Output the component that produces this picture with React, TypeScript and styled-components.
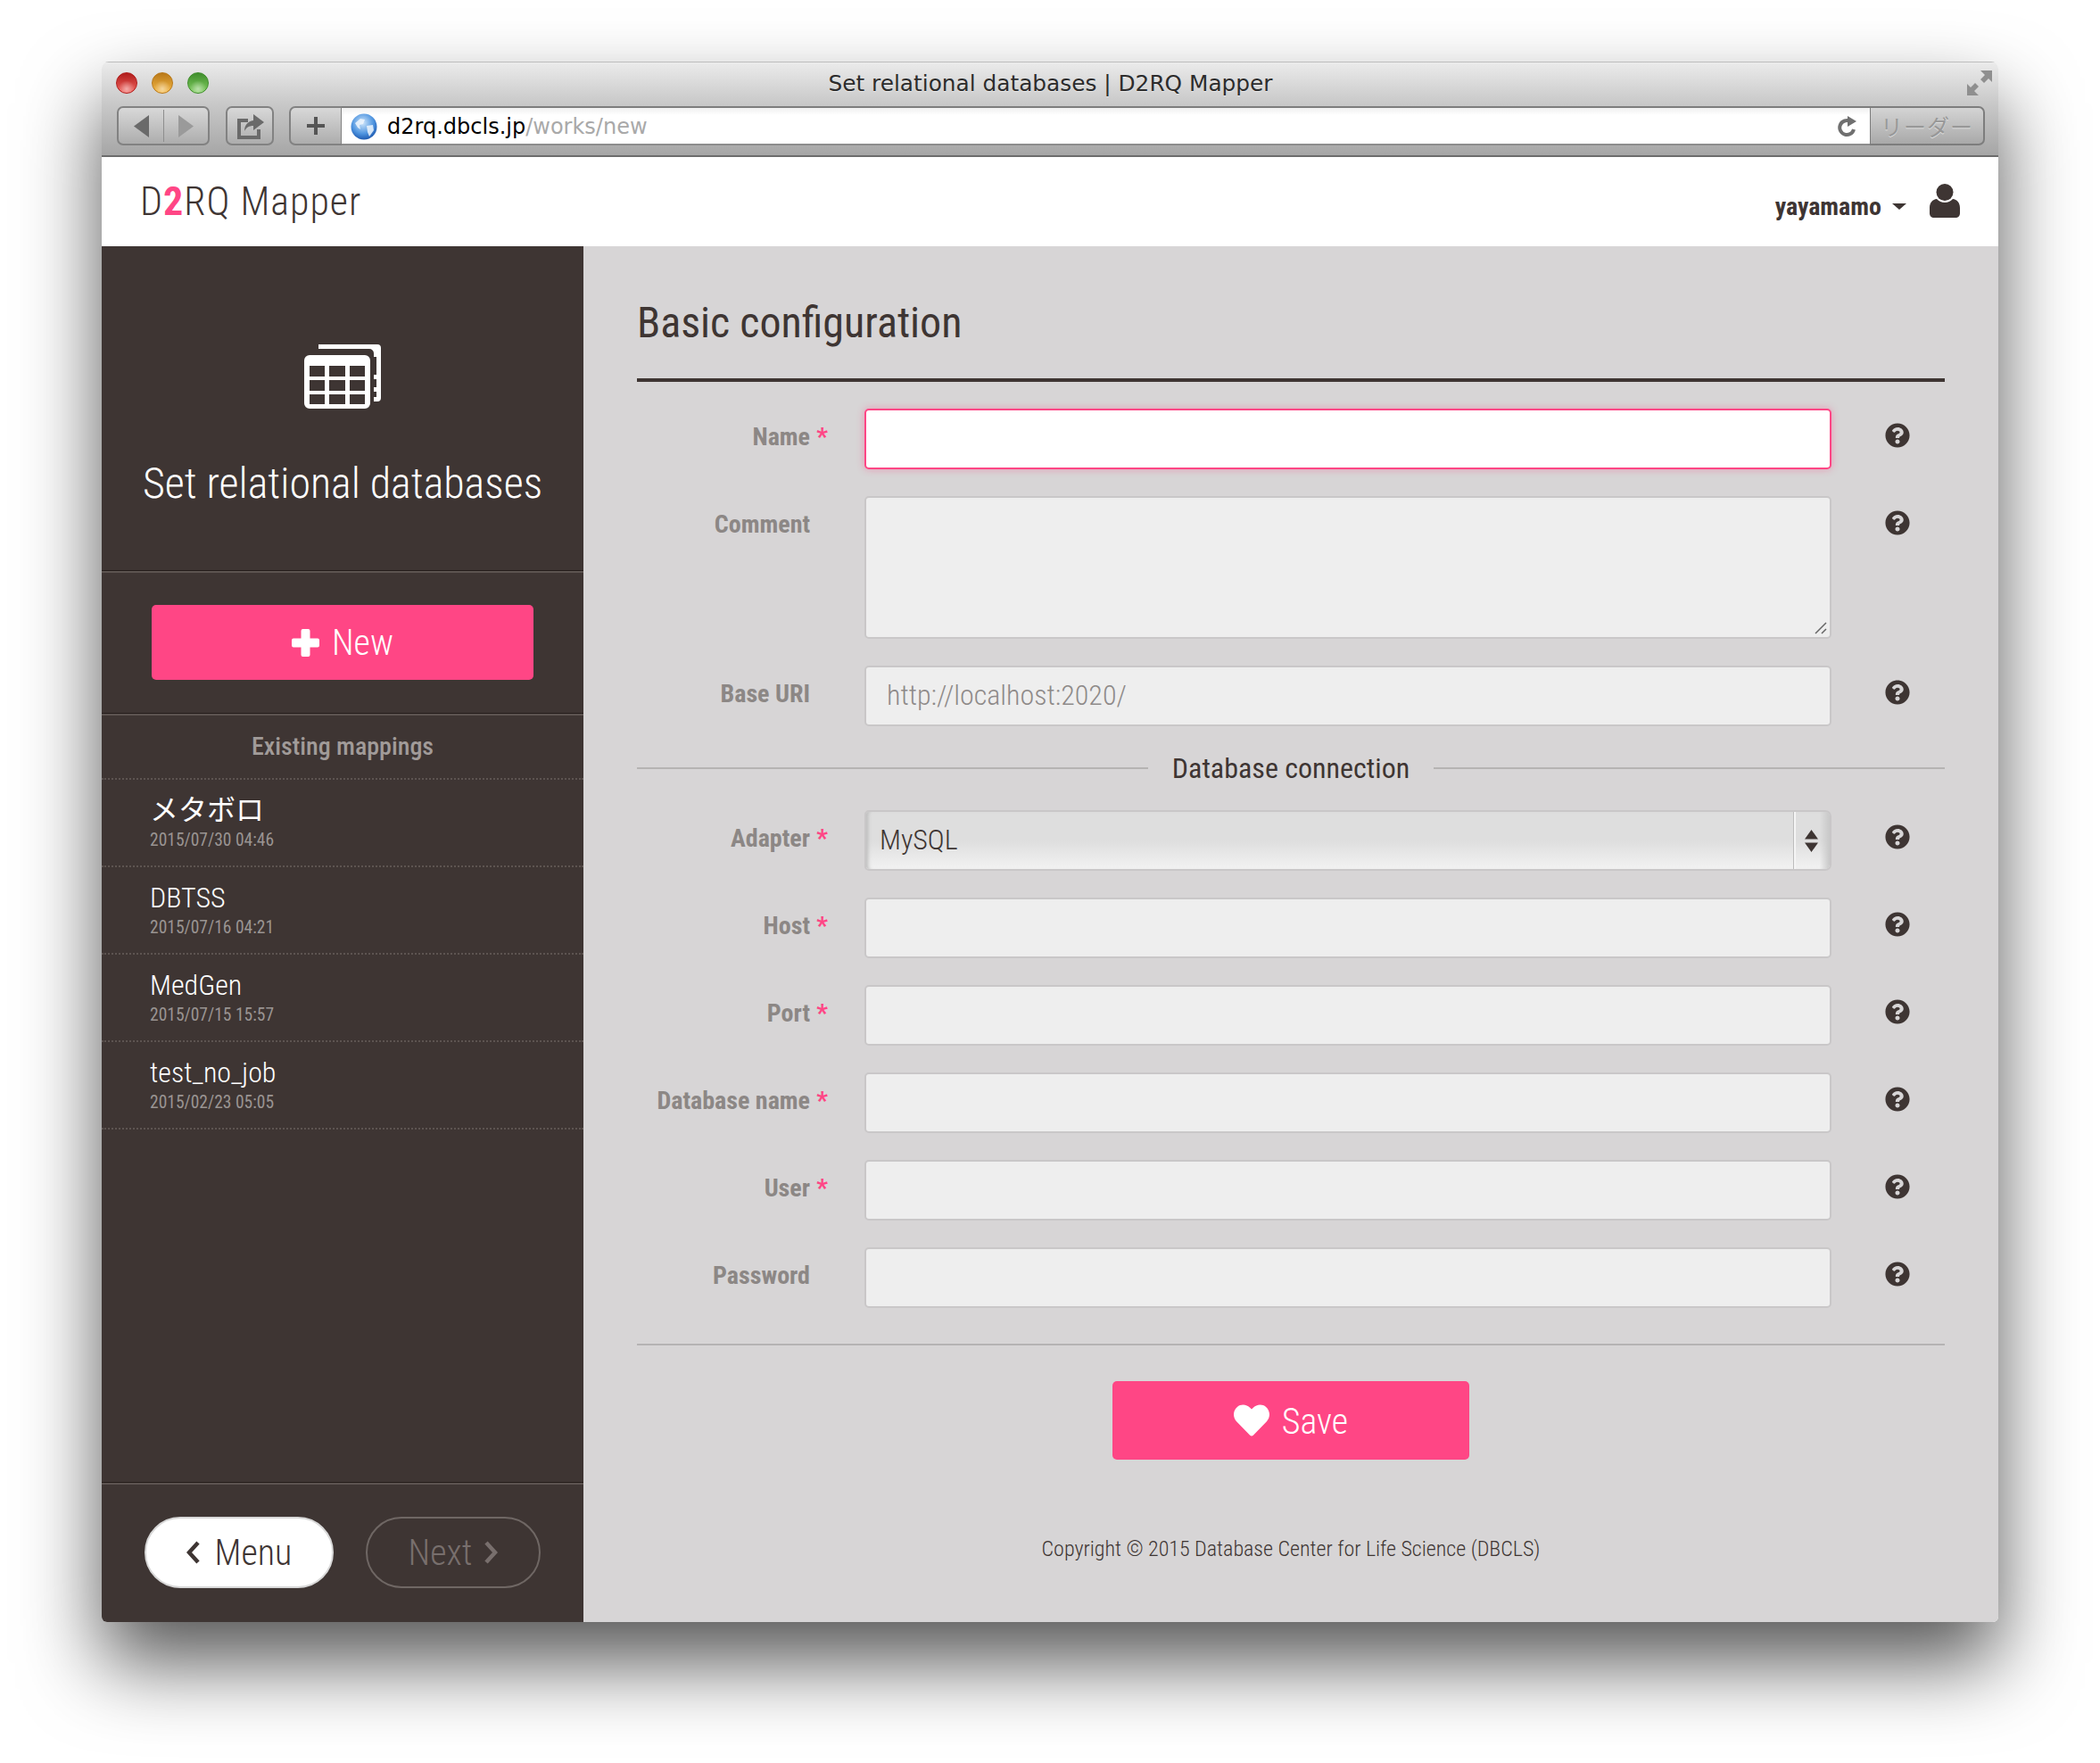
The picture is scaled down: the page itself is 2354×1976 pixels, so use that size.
import React from 'react'
import styled, { createGlobalStyle } from 'styled-components'
import { FaHeart, FaQuestionCircle } from 'react-icons/fa'

const pink = '#ff4685'
const dark = '#3e3533'

const GlobalStyle = createGlobalStyle`
  html, body { margin: 0; background: #fff; }
  body { font-family: Roboto, "Noto Sans CJK JP", sans-serif; font-stretch: 75%; }
  * { box-sizing: border-box; }
`

const Page = styled.div`
  width: 2354px;
  height: 1976px;
  padding: 69px 114px 0 114px;
  overflow: hidden;
`

const Window = styled.div`
  height: 1749px;
  border-radius: 8px 8px 6px 6px;
  box-shadow: 0 46px 88px rgba(0, 0, 0, .66);
  display: flex;
  flex-direction: column;
  overflow: hidden;
`

const TitleBar = styled.div`
  height: 107px;
  flex: none;
  background: linear-gradient(#ebebeb, #c8c8c8 45%, #a6a6a6);
  border-top: 1px solid #bdbdbd;
  border-bottom: 2px solid #6c6c6c;
  padding: 0 15px 0 16px;
`

const TitleRow = styled.div`
  height: 49px;
  padding-bottom: 3px;
  display: grid;
  grid-template-columns: 1fr auto 1fr;
  align-items: center;
`

const Lights = styled.div`
  display: flex;
  gap: 16px;
`

const Light = styled.span<{ $c: string; $e: string }>`
  width: 24px;
  height: 24px;
  border-radius: 50%;
  border: 1px solid ${p => p.$e};
  background: radial-gradient(circle at 50% 80%, #ffffff80 0, transparent 45%),
    linear-gradient(${p => p.$e}, ${p => p.$c});
`

const WindowTitle = styled.div`
  font-family: "DejaVu Sans", sans-serif;
  font-stretch: normal;
  font-size: 24.8px;
  color: #2c2c2c;
  text-shadow: 0 1px 0 #ffffff80;
  white-space: nowrap;
`

const Expand = styled.svg`
  justify-self: end;
  width: 28px;
  height: 28px;
  margin-right: -8px;
`

const Toolbar = styled.div`
  height: 44px;
  display: flex;
  align-items: stretch;
  padding-left: 1px;
`

const ToolButton = styled.div<{ $w: number; $mr?: number }>`
  width: ${p => p.$w}px;
  margin-right: ${p => p.$mr ?? 0}px;
  border: 2px solid #828282;
  border-radius: 7px;
  background: linear-gradient(#d8d8d8, #adadad);
  display: flex;
  align-items: center;
  justify-content: center;
`

const PlusButton = styled(ToolButton)`
  border-radius: 7px 0 0 7px;
  border-right-width: 1px;
`

const NavDivider = styled.span`
  width: 1px;
  height: 36px;
  margin: 0 16px;
  background: #8e8e8e;
`

const AddressBar = styled.div`
  flex: 1;
  display: flex;
  align-items: center;
  padding: 2px 14px 0 10px;
  background: linear-gradient(#f0f0f0, #fff 20%);
  border-top: 2px solid #7d7d7d;
  border-bottom: 2px solid #8d8d8d;
  font-family: "DejaVu Sans", sans-serif;
  font-stretch: normal;
  font-size: 24px;
`

const UrlHost = styled.span`
  color: #000;
  margin-left: 11px;
`

const UrlPath = styled.span`
  color: #a9a9a9;
  flex: 1;
`

const ReaderButton = styled.div`
  width: 129px;
  border: 2px solid #7d7d7d;
  border-left-width: 1px;
  border-radius: 0 7px 7px 0;
  background: linear-gradient(#d4d4d4, #a9a9a9);
  color: #989898;
  text-shadow: 0 1px 0 #e0e0e0;
  font-family: "Noto Sans CJK JP", sans-serif;
  font-stretch: normal;
  font-size: 25px;
  letter-spacing: 1px;
  display: flex;
  align-items: center;
  justify-content: center;
`

const Header = styled.header`
  height: 100px;
  flex: none;
  background: #fff;
  display: flex;
  align-items: center;
  padding: 0 43px 0 43px;
  color: ${dark};
`

const Logo = styled.div`
  font-size: 44px;
  font-weight: 300;
  letter-spacing: 1px;
  flex: 1;
`

const LogoTwo = styled.span`
  color: ${pink};
  font-weight: 700;
`

const UserName = styled.span`
  font-size: 28px;
  font-weight: 700;
  margin-top: 10px;
`

const Caret = styled.span`
  width: 0;
  height: 0;
  margin: 10px 26px 0 12px;
  border-left: 8px solid transparent;
  border-right: 8px solid transparent;
  border-top: 7px solid ${dark};
`

const UserIcon = styled.svg`
  width: 34px;
  height: 38px;
  margin-top: -2px;
`

const Body = styled.div`
  flex: 1;
  display: flex;
  min-height: 0;
`

const Sidebar = styled.aside`
  width: 540px;
  flex: none;
  background: ${dark};
  display: flex;
  flex-direction: column;
  color: #fff;
`

const SideRule = styled.div<{ $end?: boolean }>`
  height: 3px;
  flex: none;
  margin-top: ${p => (p.$end ? 'auto' : '0')};
  border-top: 1px solid #241c1a;
  border-bottom: 2px solid #5d5451;
`

const SideHead = styled.div`
  height: 363px;
  flex: none;
  padding-top: 110px;
  display: flex;
  flex-direction: column;
  align-items: center;
`

const SideTitle = styled.h1`
  margin: 55px 0 0;
  font-size: 48px;
  font-weight: 300;
  line-height: 58px;
`

const NewArea = styled.div`
  height: 157px;
  flex: none;
  padding: 36px 56px 0;
`

const PinkButton = styled.button<{ $w?: number; $h: number }>`
  width: ${p => (p.$w ? `${p.$w}px` : '100%')};
  height: ${p => p.$h}px;
  border: 0;
  border-radius: 5px;
  background: ${pink};
  color: #fff;
  font-family: inherit;
  font-stretch: inherit;
  font-weight: 300;
  font-size: 40px;
  display: flex;
  align-items: center;
  justify-content: center;
  gap: 14px;
`

const SaveLabel = styled.span`
  margin-top: 3px;
`

const ExistingTitle = styled.div`
  height: 72px;
  flex: none;
  border-bottom: 2px dotted #5d5451;
  color: #a19b99;
  font-size: 28px;
  font-weight: 500;
  line-height: 70px;
  text-align: center;
`

const MappingItem = styled.div`
  height: 98px;
  flex: none;
  border-bottom: 2px dotted #5d5451;
  padding: 14px 54px 0;
`

const MappingName = styled.div<{ $cjk?: boolean }>`
  font-size: 32px;
  font-weight: ${p => (p.$cjk ? 400 : 350)};
  line-height: 40px;
`

const MappingDate = styled.div`
  font-size: 19.5px;
  color: #9a9492;
  line-height: 28px;
`

const SideFooter = styled.div`
  height: 154px;
  flex: none;
  padding: 36px 48px 0;
  display: flex;
  gap: 36px;
`

const PillButton = styled.button<{ $ghost?: boolean }>`
  height: 80px;
  border-radius: 40px;
  font-family: inherit;
  font-stretch: inherit;
  font-weight: 300;
  font-size: 40px;
  display: flex;
  align-items: center;
  justify-content: center;
  gap: ${p => (p.$ghost ? '13px' : '16px')};
  width: ${p => (p.$ghost ? '196px' : '212px')};
  background: ${p => (p.$ghost ? 'transparent' : '#fff')};
  color: ${p => (p.$ghost ? '#786f6d' : dark)};
  border: 2px solid ${p => (p.$ghost ? '#6f6764' : '#d8d8d8')};
`

const Main = styled.main`
  flex: 1;
  background: #d7d5d6;
  padding: 0 60px;
  color: ${dark};
  display: flex;
  flex-direction: column;
`

const MainTitle = styled.h2`
  margin: 0;
  height: 152px;
  flex: none;
  border-bottom: 4px solid ${dark};
  font-size: 48px;
  font-weight: 400;
  line-height: 56px;
  padding-top: 58px;
`

const Fields = styled.div`
  padding-top: 30px;
  display: flex;
  flex-direction: column;
  gap: 30px;
`

const Row = styled.div`
  display: grid;
  grid-template-columns: 255px 1084px 60px auto;
`

const Label = styled.label`
  display: flex;
  justify-content: flex-end;
  padding: 15px 41px 0 0;
  font-size: 28px;
  font-weight: 700;
  line-height: 34px;
  color: #8c8785;
`

const Star = styled.span`
  width: 20px;
  text-align: right;
  color: ${pink};
`

const fieldBase = `
  width: 100%;
  border: 2px solid #c9c7c8;
  border-radius: 5px;
  background: #eee;
  font-family: Roboto, sans-serif;
  font-stretch: 75%;
  font-weight: 300;
  font-size: 32px;
  padding: 0 23px 2px;
  outline: none;
  color: ${dark};
  &::placeholder { color: #8e8a89; opacity: 1; }
`

const TextInput = styled.input<{ $focused?: boolean }>`
  ${fieldBase}
  height: 68px;
  ${p => p.$focused && `
    background: #fff;
    border-color: ${pink};
    box-shadow: 0 0 8px rgba(255, 70, 133, .45);
  `}
`

const TextAreaWrap = styled.div`
  position: relative;
`

const TextArea = styled.textarea`
  ${fieldBase}
  display: block;
  height: 160px;
  padding-top: 12px;
  resize: none;
`

const Grip = styled.svg`
  position: absolute;
  right: 5px;
  bottom: 5px;
  width: 14px;
  height: 14px;
`

const HelpIcon = styled(FaQuestionCircle)`
  grid-column: 4;
  width: 28px;
  height: 28px;
  margin-top: 16px;
  color: ${dark};
`

const SectionRow = styled.div`
  height: 34px;
  display: flex;
  align-items: center;
  gap: 27px;
  font-size: 32px;
  font-weight: 400;
  &::before, &::after {
    content: "";
    flex: 1;
    height: 2px;
    background: #b5b3b3;
  }
`

const SelectBox = styled.div`
  height: 68px;
  border: 2px solid #c9c7c8;
  border-radius: 5px 7px 7px 5px;
  background: linear-gradient(#dedede, #dedede 50%, #f2f2f2);
  display: flex;
  align-items: stretch;
  overflow: hidden;
  box-shadow: inset 5px 0 4px -3px #bbb;
`

const SelectValue = styled.div`
  flex: 1;
  padding-left: 15px;
  font-size: 32px;
  font-weight: 300;
  line-height: 62px;
`

const SelectArrows = styled.div`
  width: 40px;
  padding-right: 3px;
  border-left: 2px solid #f5f5f5;
  box-shadow: -1px 0 0 #bdbdbd;
  background: linear-gradient(90deg, transparent 70%, #c8c8c8);
  display: flex;
  align-items: center;
  justify-content: center;
`

const FormEnd = styled.div`
  margin-top: 40px;
  border-top: 2px solid #b5b3b3;
  padding-top: 40px;
  display: flex;
  justify-content: center;
`

const Copyright = styled.div`
  margin-top: 86px;
  font-size: 24px;
  font-weight: 300;
  text-align: center;
`

const fields = [
  { label: 'Adapter', required: true, select: true },
  { label: 'Host', required: true },
  { label: 'Port', required: true },
  { label: 'Database name', required: true },
  { label: 'User', required: true },
  { label: 'Password', required: false },
]

const mappings = [
  { name: 'メタボロ', date: '2015/07/30 04:46', cjk: true },
  { name: 'DBTSS', date: '2015/07/16 04:21' },
  { name: 'MedGen', date: '2015/07/15 15:57' },
  { name: 'test_no_job', date: '2015/02/23 05:05' },
]

function TableIcon() {
  return (
    <svg width="86" height="72" viewBox="0 0 86 72" fill="#fff">
      <path d="M16 0h66a4 4 0 0 1 4 4v56a4 4 0 0 1-4 4h-4v-5h3v-6h-3v-5h3v-9h-3v-5h3V14h-3v-4a5 5 0 0 0-5-5H16z" />
      <path fillRule="evenodd" d="M6 12h62a6 6 0 0 1 6 6v48a6 6 0 0 1-6 6H6a6 6 0 0 1-6-6V18a6 6 0 0 1 6-6zM6 24v12h17V24zm22 0v12h18V24zm23 0v12h17V24zM6 40v12h17V40zm22 0v12h18V40zm23 0v12h17V40zM6 56v11h17V56zm22 0v11h18V56zm23 0v11h17V56z" />
    </svg>
  )
}

function Globe() {
  return (
    <svg width="30" height="32" viewBox="0 0 30 32">
      <defs>
        <radialGradient id="globe" cx="45%" cy="35%" r="70%">
          <stop offset="0" stopColor="#cfe6fb" />
          <stop offset=".6" stopColor="#4f95e0" />
          <stop offset="1" stopColor="#1650a8" />
        </radialGradient>
      </defs>
      <circle cx="15" cy="16" r="14.5" fill="url(#globe)" />
      <path d="M5 12l6-5 5 1-2 5-4 1 1 5-3-2zM18 15l7-1 1 6-5 7-2-5z" fill="#eef6fd" opacity=".85" />
    </svg>
  )
}

function Chevron({ right }: { right?: boolean }) {
  return (
    <svg width="16" height="28" viewBox="0 0 16 28" fill="none">
      <path d={right ? 'M3 3l10 11L3 25' : 'M13 3L3 14l10 11'} stroke="currentColor" strokeWidth="4.5" />
    </svg>
  )
}

export default function App() {
  return (
    <Page>
      <GlobalStyle />
      <Window>
        <TitleBar>
          <TitleRow>
            <Lights>
              <Light $c="#f2655f" $e="#b01d1c" />
              <Light $c="#f5b945" $e="#b9791a" />
              <Light $c="#83cf62" $e="#3f8d2c" />
            </Lights>
            <WindowTitle>Set relational databases | D2RQ Mapper</WindowTitle>
            <Expand viewBox="0 0 28 28" fill="#8f8f8f">
              <path d="M15 0h13v13l-4-4-5 5-4-4 5-5zM0 28V15l4 4 5-5 4 4-5 5 5 5z" />
            </Expand>
          </TitleRow>
          <Toolbar>
            <ToolButton $w={104} $mr={18}>
              <svg width="17" height="25" viewBox="0 0 17 25"><path d="M17 0v25L0 12.500z" fill="#6a6a6a" /></svg>
              <NavDivider />
              <svg width="17" height="25" viewBox="0 0 17 25"><path d="M0 0v25l17-12.500z" fill="#9a9a9a" /></svg>
            </ToolButton>
            <ToolButton $w={54} $mr={17}>
              <svg width="32" height="30" viewBox="0 0 32 30" fill="#6a6a6a">
                <path d="M2 7h12v4H6v15h18v-7h4v11H2z" />
                <path d="M20 2l12 9-12 9v-5c-5 0-8 2-10 6 0-7 4-11 10-12z" />
              </svg>
            </ToolButton>
            <PlusButton $w={59}>
              <svg width="20" height="20" viewBox="0 0 20 20" fill="#555"><path d="M8 0h4v8h8v4h-8v8H8v-8H0V8h8z" /></svg>
            </PlusButton>
            <AddressBar>
              <Globe />
              <UrlHost>d2rq.dbcls.jp</UrlHost>
              <UrlPath>/works/new</UrlPath>
              <svg width="22" height="24" viewBox="0 0 22 24" fill="none">
                <path d="M18 15a8 8 0 1 1-4-9" stroke="#707070" strokeWidth="4" />
                <path d="M11 0l10 6-10 6z" fill="#707070" />
              </svg>
            </AddressBar>
            <ReaderButton>リーダー</ReaderButton>
          </Toolbar>
        </TitleBar>
        <Header>
          <Logo>D<LogoTwo>2</LogoTwo>RQ Mapper</Logo>
          <UserName>yayamamo</UserName>
          <Caret />
          <UserIcon viewBox="0 0 34 38" fill={dark}>
            <circle cx="17" cy="9.500" r="9.500" />
            <path d="M8 17c2.500 2.500 5.500 4 9 4s6.500-1.500 9-4c4.500.5 8 4 8 10v6c0 3-2 5-5 5H5c-3 0-5-2-5-5v-6c0-6 3.500-9.500 8-10z" />
          </UserIcon>
        </Header>
        <Body>
          <Sidebar>
            <SideHead>
              <TableIcon />
              <SideTitle>Set relational databases</SideTitle>
            </SideHead>
            <SideRule />
            <NewArea>
              <PinkButton $h={84}>
                <svg width="31" height="31" viewBox="0 0 31 31" fill="#fff">
                  <path d="M10.500 2a2 2 0 0 1 2-2h6a2 2 0 0 1 2 2v8.500H29a2 2 0 0 1 2 2v6a2 2 0 0 1-2 2h-8.500V29a2 2 0 0 1-2 2h-6a2 2 0 0 1-2-2v-8.500H2a2 2 0 0 1-2-2v-6a2 2 0 0 1 2-2h8.500z" />
                </svg>
                New
              </PinkButton>
            </NewArea>
            <SideRule />
            <ExistingTitle>Existing mappings</ExistingTitle>
            {mappings.map(m => (
              <MappingItem key={m.name}>
                <MappingName $cjk={m.cjk}>{m.name}</MappingName>
                <MappingDate>{m.date}</MappingDate>
              </MappingItem>
            ))}
            <SideRule $end />
            <SideFooter>
              <PillButton><Chevron />Menu</PillButton>
              <PillButton $ghost>Next<Chevron right /></PillButton>
            </SideFooter>
          </Sidebar>
          <Main>
            <MainTitle>Basic configuration</MainTitle>
            <Fields>
              <Row>
                <Label>Name<Star>*</Star></Label>
                <TextInput $focused />
                <HelpIcon />
              </Row>
              <Row>
                <Label>Comment<Star /></Label>
                <TextAreaWrap>
                  <TextArea />
                  <Grip viewBox="0 0 14 14" stroke="#666" strokeWidth="1.500">
                    <path d="M1 13L13 1M8 13l5-5" />
                  </Grip>
                </TextAreaWrap>
                <HelpIcon />
              </Row>
              <Row>
                <Label>Base URI<Star /></Label>
                <TextInput placeholder="http://localhost:2020/" />
                <HelpIcon />
              </Row>
              <SectionRow>Database connection</SectionRow>
              {fields.map(f => (
                <Row key={f.label}>
                  <Label>{f.label}<Star>{f.required ? '*' : ''}</Star></Label>
                  {f.select ? (
                    <SelectBox>
                      <SelectValue>MySQL</SelectValue>
                      <SelectArrows>
                        <svg width="15" height="25" viewBox="0 0 15 25" fill={dark}>
                          <path d="M7.500 0L15 10.500H0zM0 14.500h15L7.500 25z" />
                        </svg>
                      </SelectArrows>
                    </SelectBox>
                  ) : <TextInput />}
                  <HelpIcon />
                </Row>
              ))}
            </Fields>
            <FormEnd>
              <PinkButton $w={400} $h={88}><FaHeart size={40} /><SaveLabel>Save</SaveLabel></PinkButton>
            </FormEnd>
            <Copyright>Copyright © 2015 Database Center for Life Science (DBCLS)</Copyright>
          </Main>
        </Body>
      </Window>
    </Page>
  )
}
